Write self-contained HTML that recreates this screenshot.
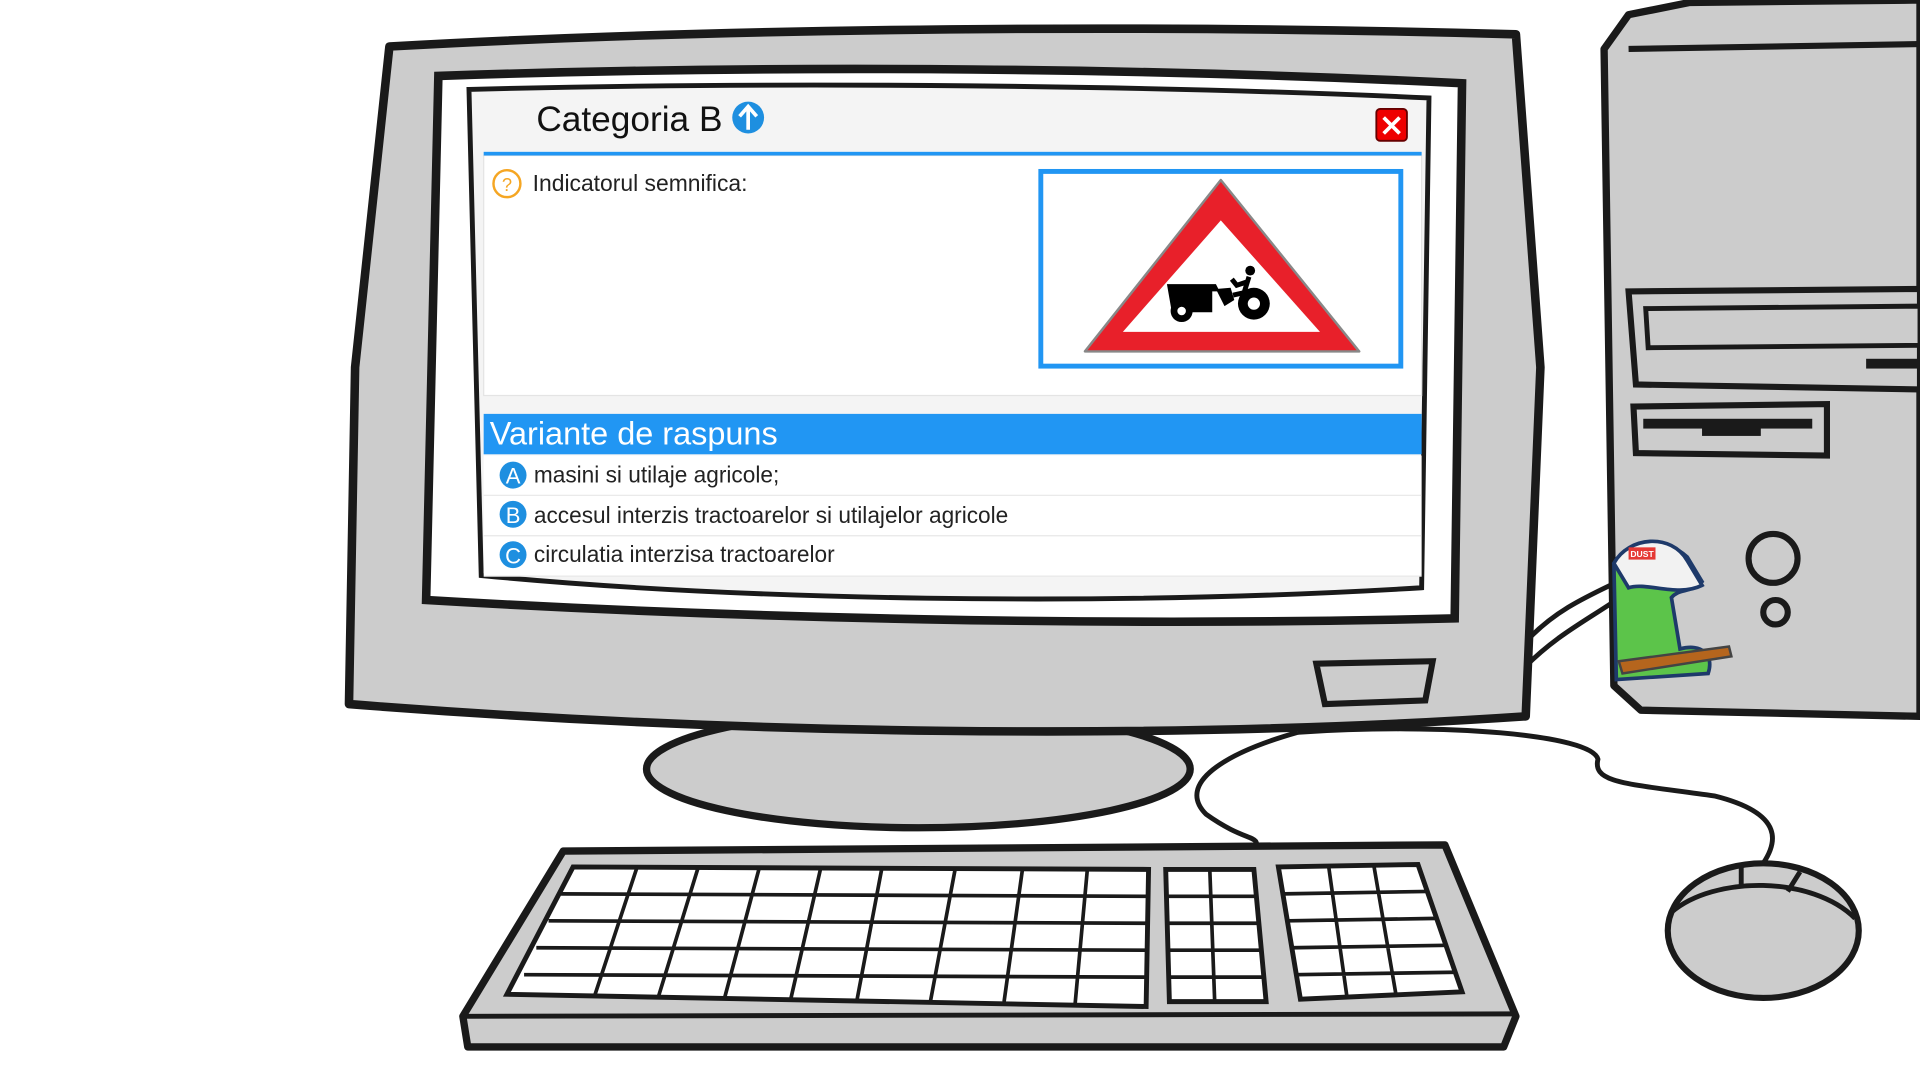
<!DOCTYPE html>
<html><head><meta charset="utf-8"><style>
html,body{margin:0;padding:0;background:#fff;width:1920px;height:1080px;overflow:hidden}
svg{display:block}
text{font-family:"Liberation Sans",sans-serif}
</style></head><body>
<svg width="1920" height="1080" viewBox="0 0 1568 882" preserveAspectRatio="none">
<!-- tower -->
<path d="M1310,40 L1330,12 L1380,2 L1568,0 L1568,585 L1340,580 L1318,560 Z" fill="#cccccc" stroke="#1a1a1a" stroke-width="6" stroke-linejoin="round"/>
<path d="M1330,40 L1568,36" stroke="#1a1a1a" stroke-width="5" fill="none"/>
<path d="M1330,238 L1568,236 L1568,318 L1336,314 Z" fill="#cccccc" stroke="#1a1a1a" stroke-width="5"/>
<path d="M1344,252 L1568,250 L1568,282 L1346,284 Z" fill="#cccccc" stroke="#1a1a1a" stroke-width="4"/>
<rect x="1524" y="293" width="44" height="8" fill="#1a1a1a"/>
<path d="M1334,332 L1492,330 L1492,372 L1336,370 Z" fill="#cccccc" stroke="#1a1a1a" stroke-width="5"/>
<rect x="1342" y="342" width="138" height="8" fill="#1a1a1a"/>
<rect x="1390" y="348" width="48" height="8" fill="#1a1a1a"/>
<circle cx="1448" cy="456" r="20" fill="none" stroke="#1a1a1a" stroke-width="5"/>
<circle cx="1450" cy="500" r="10" fill="none" stroke="#1a1a1a" stroke-width="5"/>
<!-- cables -->
<path d="M1245,545 C1270,520 1290,510 1320,490 M1250,520 C1270,500 1290,490 1315,478" stroke="#1a1a1a" stroke-width="4" fill="none"/>
<path d="M1060,598 C1000,615 960,640 985,665 C1020,690 1030,680 1025,695" stroke="#1a1a1a" stroke-width="4" fill="none"/>
<path d="M1060,598 C1180,590 1300,600 1305,620 C1300,640 1330,640 1400,650 C1460,665 1450,690 1440,705" stroke="#1a1a1a" stroke-width="4" fill="none"/>
<!-- mouse -->
<ellipse cx="1440" cy="760" rx="78" ry="55" fill="#cccccc" stroke="#1a1a1a" stroke-width="5"/>
<path d="M1365,745 C1400,715 1480,715 1515,750" stroke="#1a1a1a" stroke-width="4" fill="none"/>
<path d="M1422,707 L1422,725 M1470,712 L1460,728" stroke="#1a1a1a" stroke-width="4"/>
<!-- mascot -->
<path d="M1318,460 C1330,440 1360,438 1378,455 L1390,475 C1380,485 1372,480 1365,488 L1372,530 C1390,525 1400,535 1395,550 L1320,555 Z" fill="#5cc44a" stroke="#1e3a6a" stroke-width="3"/>
<path d="M1318,460 C1330,438 1365,435 1378,458 L1390,478 C1370,488 1345,475 1330,480 Z" fill="#f2f2f2" stroke="#1e3a6a" stroke-width="3"/>
<rect x="1330" y="447" width="22" height="10" fill="#e53935"/>
<text x="1341" y="455" font-size="7" fill="#fff" text-anchor="middle" font-weight="bold">DUST</text>
<path d="M1322,540 L1412,528 L1414,536 L1325,550 Z" fill="#b5651d" stroke="#444" stroke-width="2"/>
<!-- stand -->
<ellipse cx="750" cy="628" rx="222" ry="48" fill="#cccccc" stroke="#1a1a1a" stroke-width="6"/>
<!-- monitor -->
<path d="M318,38 C600,22 950,20 1238,28 L1258,300 L1246,585 C950,605 600,600 285,575 L290,300 Z" fill="#cccccc" stroke="#1a1a1a" stroke-width="7" stroke-linejoin="round"/>
<path d="M1075,542 L1170,540 L1164,572 L1082,575 Z" fill="#cccccc" stroke="#1a1a1a" stroke-width="5"/>
<path d="M358,62 C650,52 950,56 1194,68 L1188,505 C900,512 600,505 348,490 Z" fill="#fff" stroke="#1a1a1a" stroke-width="7"/>
<path d="M383,73 C650,66 950,70 1167,80 L1161,480 C900,496 600,490 393,470 Z" fill="#f4f4f4" stroke="#1a1a1a" stroke-width="4"/>
<!-- content -->
<rect x="395" y="127" width="766" height="196" fill="#fff" stroke="#e4e4e4" stroke-width="1"/>
<rect x="395" y="124" width="766" height="3" fill="#2196f3"/>
<text x="438" y="107" font-size="28.8" fill="#111">Categoria B</text>
<circle cx="611" cy="96" r="13" fill="#1e8fe0"/>
<path d="M611,106 L611,88 M604,95 L611,87 L618,95" stroke="#fff" stroke-width="3" fill="none"/>
<rect x="1124" y="89" width="25" height="26" rx="3" fill="#e00" stroke="#600" stroke-width="1.5"/>
<path d="M1130,96 L1143,109 M1143,96 L1130,109" stroke="#fff" stroke-width="3"/>
<circle cx="414" cy="150" r="11" fill="none" stroke="#f5a623" stroke-width="2"/>
<text x="414" y="156" font-size="15" fill="#f5a623" text-anchor="middle">?</text>
<text x="435" y="156" font-size="18.7" fill="#222">Indicatorul semnifica:</text>
<rect x="850" y="140" width="294" height="159" fill="#fff" stroke="#2196f3" stroke-width="4"/>
<path d="M997,147 L1110,287 L886,287 Z" fill="#e8202a" stroke="#888" stroke-width="2" stroke-linejoin="round"/>
<path d="M997,180 L1078,271 L917,271 Z" fill="#fff"/>
<path d="M953,232 L993,232 L996,238 L990,238 L990,255 L957,255 Z" fill="#000"/>
<path d="M993,236 L1005,235 L1008,245 L1000,250" fill="#000"/>
<circle cx="1024" cy="248" r="13" fill="#000"/><circle cx="1024" cy="248" r="5" fill="#fff"/>
<circle cx="965" cy="254" r="9" fill="#000"/><circle cx="965" cy="254" r="3.5" fill="#fff"/>
<circle cx="1021" cy="221" r="4" fill="#000"/>
<path d="M1020,226 L1016,239 L1007,241 M1019,230 L1010,233 L1006,228" stroke="#000" stroke-width="4" fill="none"/>
<rect x="395" y="338" width="766" height="33" fill="#2196f3"/>
<text x="400" y="363" font-size="26.5" fill="#fff">Variante de raspuns</text>
<rect x="395" y="372" width="766" height="98" fill="#fff"/>
<path d="M395,404.5 H1161 M395,437.5 H1161 M395,470.5 H1161" stroke="#e8e8e8"/>
<g font-size="18.5" fill="#222">
<circle cx="419" cy="388" r="11" fill="#1e8fe0"/><text x="419" y="395" text-anchor="middle" fill="#fff" font-size="18">A</text>
<text x="436" y="394">masini si utilaje agricole;</text>
<circle cx="419" cy="420" r="11" fill="#1e8fe0"/><text x="419" y="427" text-anchor="middle" fill="#fff" font-size="18">B</text>
<text x="436" y="427">accesul interzis tractoarelor si utilajelor agricole</text>
<circle cx="419" cy="453" r="11" fill="#1e8fe0"/><text x="419" y="460" text-anchor="middle" fill="#fff" font-size="18">C</text>
<text x="436" y="459">circulatia interzisa tractoarelor</text>
</g>
<!-- keyboard -->
<path d="M460,695 L1180,690 L1238,830 L1228,855 L382,855 L378,830 Z" fill="#cccccc" stroke="#1a1a1a" stroke-width="6" stroke-linejoin="round"/>
<path d="M378,830 L1238,828" stroke="#1a1a1a" stroke-width="4"/>
<g fill="#fff" stroke="#1a1a1a" stroke-width="4">
<path d="M468,708 L938,710 L936,822 L414,812 Z"/>
<path d="M952,710 L1024,710 L1034,818 L955,818 Z"/>
<path d="M1044,708 L1158,706 L1194,810 L1062,816 Z"/>
</g>
<g stroke="#1a1a1a" stroke-width="3" fill="none">
<path d="M458,730 L938,732 M448,752 L938,754 M438,774 L938,776 M428,796 L938,798"/>
<path d="M520,709 L486,812 M570,709 L538,813 M620,709 L592,814 M670,710 L646,815 M720,710 L700,816 M780,710 L760,817 M835,710 L820,818 M888,710 L878,820"/>
<path d="M953,732 L1026,732 M953,754 L1028,754 M954,776 L1030,776 M955,798 L1032,798 M988,710 L992,818"/>
<path d="M1048,730 L1166,728 M1052,752 L1174,750 M1055,774 L1182,772 M1058,796 L1188,794 M1085,707 L1100,814 M1122,707 L1140,812"/>
</g>
</svg>
</body></html>
